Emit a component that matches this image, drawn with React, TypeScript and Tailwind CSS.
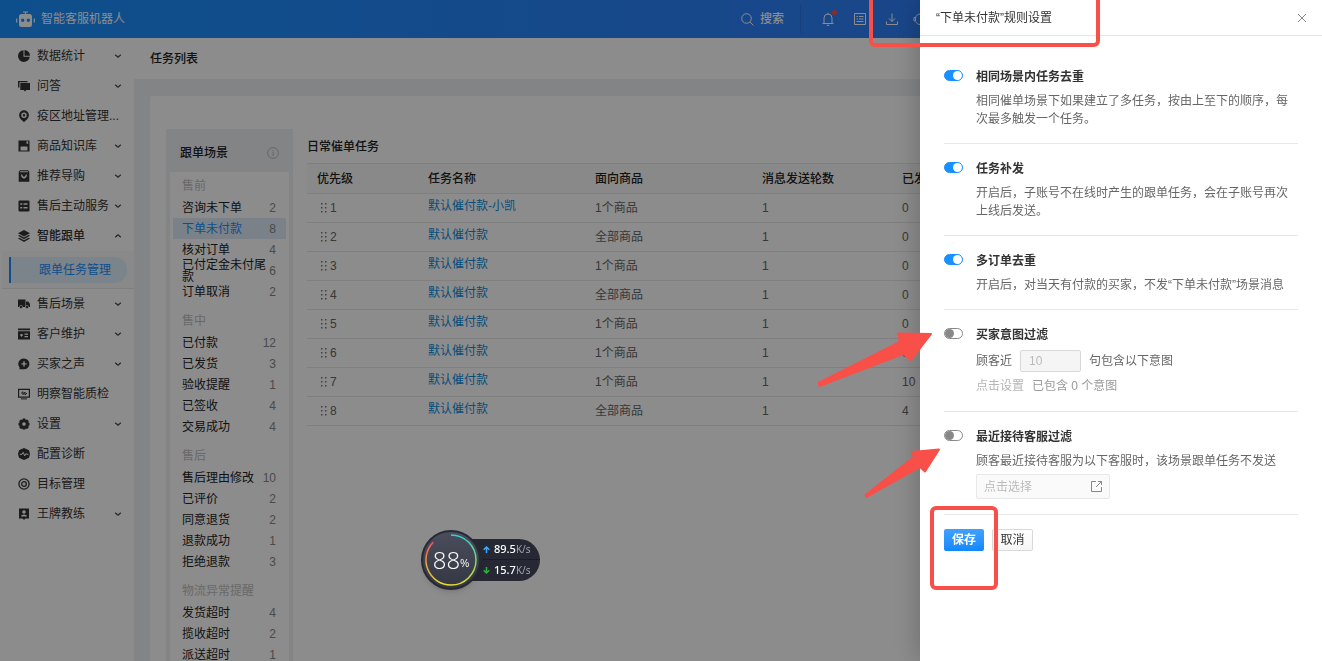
import type { ReactNode } from 'react';

interface NavItem {
  label: string;
  icon: ReactNode;
  arrow?: boolean;
  open?: boolean;
}

interface SceneGroup {
  title: string;
  items: { name: string; count: number }[];
}

interface SwitchProps {
  id: string;
  defaultChecked?: boolean;
}

interface RuleProps {
  id: string;
  title: string;
  on?: boolean;
  children: ReactNode;
}

function Glyph({ children }: { children: ReactNode }) {
  return (
    <svg viewBox="0 0 12 12" className="w-3 h-3 flex-shrink-0" fill="#333" aria-hidden="true">
      {children}
    </svg>
  );
}

const navTop: NavItem[] = [
  {
    label: '数据统计',
    arrow: true,
    icon: (
      <>
        <path d="M5.500.200A5.900 5.900 0 1 0 11.800 6.700H5.500z" />
        <path d="M6.500 0v5.700H12A5.700 5.700 0 0 0 6.500 0z" />
      </>
    ),
  },
  {
    label: '问答',
    arrow: true,
    icon: (
      <>
        <path d="M0 1h9.500v1.200H1.400v5.300H0z" />
        <path d="M2.300 3H12v7H8.300L7 11.400 5.700 10H2.300z" />
      </>
    ),
  },
  {
    label: '疫区地址管理...',
    icon: (
      <path
        fillRule="evenodd"
        d="M6 .3a4.900 4.900 0 0 1 4.900 4.900c0 2.900-3 5.300-4.900 6.800C4.100 10.500 1.100 8.100 1.100 5.200A4.900 4.900 0 0 1 6 .3zM6 2.500a2.700 2.700 0 1 0 0 5.400 2.700 2.700 0 0 0 0-5.400zM6 3.900a1.300 1.300 0 1 1 0 2.600 1.300 1.300 0 0 1 0-2.600z"
      />
    ),
  },
  {
    label: '商品知识库',
    arrow: true,
    icon: <path fillRule="evenodd" d="M.500.500h11v11H.500zM8.500 1.300v2.500h1.700v-2.500zM2.500 6.500v4h7v-4z" />,
  },
  {
    label: '推荐导购',
    arrow: true,
    icon: (
      <path
        fillRule="evenodd"
        d="M2 .3h8l1.300 1.500v9.900H.700V1.800zM2.300 1.300l-.6 1h8.600l-.6-1zM3 4.500c0 5.200 6 5.200 6 0H7.700c0 3-3.400 3-3.400 0z"
      />
    ),
  },
  {
    label: '售后主动服务',
    arrow: true,
    icon: (
      <path
        fillRule="evenodd"
        d="M1.500.500h9a1 1 0 0 1 1 1v9a1 1 0 0 1-1 1h-9a1 1 0 0 1-1-1v-9a1 1 0 0 1 1-1zM2.300 3.300v1.400h2V3.300zM5.500 3.300v1.400h4V3.300zM2.300 7v1.400h2V7zM5.500 7v1.400h4V7z"
      />
    ),
  },
  {
    label: '智能跟单',
    arrow: true,
    open: true,
    icon: (
      <>
        <path d="M6 0l6 3.200-6 3.200L0 3.200z" />
        <path d="M1.400 5L6 7.500 10.600 5l1.400.800L6 9.200 0 5.800z" />
        <path d="M1.400 7.800L6 10.300l4.600-2.500 1.400.8L6 12 0 8.600z" />
      </>
    ),
  },
];

const navBottom: NavItem[] = [
  {
    label: '售后场景',
    arrow: true,
    icon: (
      <>
        <path d="M0 1.500h7.500v7.500H0z" />
        <path d="M8 3.500h2.300L12 6v3H8z" />
        <circle cx="3" cy="9" r="1.600" stroke="#fff" strokeWidth=".6" />
        <circle cx="9" cy="9" r="1.600" stroke="#fff" strokeWidth=".6" />
      </>
    ),
  },
  {
    label: '客户维护',
    arrow: true,
    icon: (
      <path
        fillRule="evenodd"
        d="M0 .5h12v1.800H0zM0 3.200h12v8.300H0zM2 7l1.500 2L5 7l-.8-1H2.800zM6.500 5.500v1.200H10V5.500zM6.500 8v1.200H10V8z"
      />
    ),
  },
  {
    label: '买家之声',
    arrow: true,
    icon: (
      <path
        fillRule="evenodd"
        d="M6 .5a5.400 5.400 0 1 1 0 10.800H1.500V9.300A5.400 5.400 0 0 1 6 .5zM5.300 3.300v1.900H3.400v1.400h1.900v1.900h1.400V6.600h1.900V5.200H6.700V3.300z"
      />
    ),
  },
  {
    label: '明察智能质检',
    icon: (
      <>
        <path fillRule="evenodd" d="M0 .8h12v9H0zM1.200 2v6.600h9.600V2z" />
        <path d="M3 10.400h6v1H3z" />
        <path d="M3 5.500L5 3.700v3L7 4v3l2-2" fill="none" stroke="#333" />
      </>
    ),
  },
  {
    label: '设置',
    arrow: true,
    icon: (
      <path
        fillRule="evenodd"
        d="M4.700.500h2.600l.4 1.400 1.400-.500 1.700 1.700-.5 1.500 1.200.400v2.300l-1.200.500.5 1.400-1.700 1.700-1.400-.5-.4 1.200H4.700l-.4-1.200-1.400.5-1.700-1.700.5-1.400L.500 7.300V5l1.200-.4-.5-1.500 1.700-1.700 1.400.5zM6 4.300a1.800 1.800 0 1 0 0 3.600 1.800 1.800 0 0 0 0-3.600z"
      />
    ),
  },
  {
    label: '配置诊断',
    icon: (
      <>
        <path d="M6 0l5 2.200L12 6l-1 3.800L6 12 1 9.800 0 6l1-3.800z" />
        <path d="M1.800 6.300H4l1.200-2 1.500 3.600 1.200-2.300 1 .7h1.500" fill="none" stroke="#fff" />
      </>
    ),
  },
  {
    label: '目标管理',
    icon: (
      <g fill="none" stroke="#333" strokeWidth="1.300">
        <circle cx="6" cy="6" r="5.100" />
        <circle cx="6" cy="6" r="2.300" />
      </g>
    ),
  },
  {
    label: '王牌教练',
    arrow: true,
    icon: (
      <path
        fillRule="evenodd"
        d="M1 .5h10v10H7.300L6 12l-1.300-1.500H1zM6 2.200a1.800 1.800 0 1 0 0 3.600 1.800 1.800 0 0 0 0-3.600zM3 8.600h6C9 5.900 3 5.900 3 8.600z"
      />
    ),
  },
];

const sceneGroups: SceneGroup[] = [
  {
    title: '售前',
    items: [
      { name: '咨询未下单', count: 2 },
      { name: '下单未付款', count: 8 },
      { name: '核对订单', count: 4 },
      { name: '已付定金未付尾款', count: 6 },
      { name: '订单取消', count: 2 },
    ],
  },
  {
    title: '售中',
    items: [
      { name: '已付款', count: 12 },
      { name: '已发货', count: 3 },
      { name: '验收提醒', count: 1 },
      { name: '已签收', count: 4 },
      { name: '交易成功', count: 4 },
    ],
  },
  {
    title: '售后',
    items: [
      { name: '售后理由修改', count: 10 },
      { name: '已评价', count: 2 },
      { name: '同意退货', count: 2 },
      { name: '退款成功', count: 1 },
      { name: '拒绝退款', count: 3 },
    ],
  },
  {
    title: '物流异常提醒',
    items: [
      { name: '发货超时', count: 4 },
      { name: '揽收超时', count: 2 },
      { name: '派送超时', count: 1 },
    ],
  },
];

const tasks = [
  { name: '默认催付款-小凯', target: '1个商品', rounds: 1, sent: 0 },
  { name: '默认催付款', target: '全部商品', rounds: 1, sent: 0 },
  { name: '默认催付款', target: '1个商品', rounds: 1, sent: 0 },
  { name: '默认催付款', target: '全部商品', rounds: 1, sent: 0 },
  { name: '默认催付款', target: '1个商品', rounds: 1, sent: 0 },
  { name: '默认催付款', target: '1个商品', rounds: 1, sent: 6 },
  { name: '默认催付款', target: '1个商品', rounds: 1, sent: 10 },
  { name: '默认催付款', target: '全部商品', rounds: 1, sent: 4 },
];

function NavRow({ item }: { item: NavItem }) {
  return (
    <li>
      <button className="flex items-center w-full h-[30px] pl-[18px] pr-3">
        <Glyph>{item.icon}</Glyph>
        <span className={`ml-[7px] whitespace-nowrap text-left ${item.open ? 'font-medium' : ''}`}>
          {item.label}
        </span>
        {item.arrow && (
          <svg
            viewBox="0 0 8 8"
            className={`ml-auto w-2 h-2 flex-shrink-0 ${item.open ? 'rotate-180' : ''}`}
            fill="none"
            stroke="#444"
            strokeWidth="1.200"
            aria-hidden="true"
          >
            <path d="M1.200 2.700L4 5.300l2.800-2.600" />
          </svg>
        )}
      </button>
    </li>
  );
}

function Header() {
  return (
    <header className="flex items-center h-[38px] flex-shrink-0 pl-4 pr-[395px] text-white bg-linear-to-r from-[#1890ff] to-[#3478f8]">
      <svg viewBox="0 0 19 17" className="w-[19px] h-[17px]" aria-hidden="true">
        <path d="M7 1h5M9.500 1v2" stroke="#fff" strokeWidth="1.200" />
        <path
          fill="#fff"
          fillRule="evenodd"
          d="M5.500 3h8A2.500 2.500 0 0 1 16 5.500v8a2.500 2.500 0 0 1-2.500 2.500h-8A2.500 2.500 0 0 1 3 13.500v-8A2.500 2.500 0 0 1 5.500 3zM6.700 7.500a1.700 1.700 0 1 0 0 3.400 1.700 1.700 0 0 0 0-3.400zM12.300 7.500a1.700 1.700 0 1 0 0 3.400 1.700 1.700 0 0 0 0-3.400z"
        />
        <path d="M.7 7.500v4M18.300 7.500v4" stroke="#fff" strokeWidth="1.200" />
      </svg>
      <h1 className="ml-[6px]">智能客服机器人</h1>

      <div className="flex items-center ml-auto">
        <button className="flex items-center gap-[6px]">
          <svg viewBox="0 0 13 13" className="w-[13px] h-[13px]" fill="none" stroke="#fff" aria-hidden="true">
            <circle cx="5.500" cy="5.500" r="4.800" />
            <path d="M9 9l3.500 3.500" />
          </svg>
          <span className="font-medium">搜索</span>
        </button>
        <span className="ml-4 w-px h-7 bg-black/10" />
        <div className="flex items-center gap-[18px] ml-5">
          <button className="relative" aria-label="通知">
            <svg viewBox="0 0 14 14" className="w-[14px] h-[14px]" fill="none" stroke="#fff" aria-hidden="true">
              <path d="M1.500 11.500h11M3 11.500V6a4 4 0 0 1 8 0v5.500M7 2V.8M5.800 13.300h2.400" />
            </svg>
            <span className="absolute -top-[2px] -right-[2px] w-[5px] h-[5px] rounded-full bg-[#ff4d4f]" />
          </button>
          <button aria-label="清单">
            <svg viewBox="0 0 14 14" className="w-[14px] h-[14px]" fill="none" stroke="#fff" aria-hidden="true">
              <path d="M1.500 1.500h11v11h-11zM3.500 4.500h1.500M6 4.500h4.500M3.500 7h1.500M6 7h4.500M3.500 9.500h7" />
            </svg>
          </button>
          <button aria-label="下载">
            <svg viewBox="0 0 14 14" className="w-[14px] h-[14px]" fill="none" stroke="#fff" aria-hidden="true">
              <path d="M7 1.500v8M4 6.500l3 3 3-3M1.500 9.500v3h11v-3" />
            </svg>
          </button>
          <button className="-ml-1" aria-label="客服">
            <svg viewBox="0 0 14 14" className="w-[14px] h-[14px]" fill="none" stroke="#fff" aria-hidden="true">
              <path d="M2.500 6.500a4.500 4.500 0 0 1 9 0M2.500 5.500H1v3.500h1.500zM11.500 5.500H13v3.500h-1.500zM3 9.500c.5 2 2 3 4 3" />
            </svg>
          </button>
        </div>
      </div>
    </header>
  );
}

function Sidebar() {
  return (
    <nav className="w-[134px] flex-shrink-0 pt-[3px] bg-white text-[#333]">
      <ul>
        {navTop.map((item) => (
          <NavRow key={item.label} item={item} />
        ))}
      </ul>
      <div className="flex items-center h-[38px] ml-[2px] px-[7px] bg-[#fafafa] border-b border-[#e8e8e8]">
        <a
          href="#tasks"
          className="flex items-center w-full h-[26px] pl-7 rounded-r-full border-l-2 border-[#1890ff] bg-[#e0effd] text-[#1890ff]"
        >
          跟单任务管理
        </a>
      </div>
      <ul>
        {navBottom.map((item) => (
          <NavRow key={item.label} item={item} />
        ))}
      </ul>
    </nav>
  );
}

function ScenePanel() {
  return (
    <aside className="w-[127px] flex-shrink-0 px-1 bg-[#eef1f5]">
      <div className="flex items-center justify-between h-[43px] pt-1 px-[10px]">
        <h3 className="font-medium text-[#222]">跟单场景</h3>
        <svg viewBox="0 0 12 12" className="w-3 h-3" fill="none" stroke="#bbb" aria-hidden="true">
          <circle cx="6" cy="6" r="5.400" />
          <path d="M6 5v4M6 3v1" />
        </svg>
      </div>
      <div className="px-[3px] pt-1 pb-3 bg-white">
        {sceneGroups.map((group, i) => (
          <section key={group.title} className={i > 0 ? 'mt-[9px]' : ''}>
            <h4 className="h-[21px] leading-[21px] pl-[9px] text-[#c0c0c0]">{group.title}</h4>
            <ul>
              {group.items.map((item) => {
                const active = item.name === '下单未付款';
                return (
                  <li key={item.name}>
                    <button
                      className={`flex items-center justify-between w-full h-[21px] pl-[9px] pr-[10px] text-left ${
                        active ? 'bg-[#deebf8] text-[#1890ff]' : 'text-[#222]'
                      }`}
                    >
                      <span className="leading-3">{item.name}</span>
                      <span className="text-[#888]">{item.count}</span>
                    </button>
                  </li>
                );
              })}
            </ul>
          </section>
        ))}
      </div>
    </aside>
  );
}

function TaskTable() {
  return (
    <div className="flex-1 min-w-0 ml-[14px]">
      <h3 className="h-[34px] leading-[36px] font-medium text-[#222]">日常催单任务</h3>
      <table className="w-full table-fixed border-t border-[#e8e8e8] text-left text-[#666]">
        <thead>
          <tr className="h-[30px] bg-[#fafafa] border-b border-[#e8e8e8] text-[#222]">
            <th className="w-[111px] px-[10px] font-medium">优先级</th>
            <th className="w-[167px] px-[10px] font-medium">任务名称</th>
            <th className="w-[167px] px-[10px] font-medium">面向商品</th>
            <th className="w-[140px] px-[10px] font-medium">消息发送轮数</th>
            <th className="px-[10px] font-medium">已发送人数</th>
          </tr>
        </thead>
        <tbody>
          {tasks.map((task, i) => (
            <tr key={i} className="h-[29px] border-b border-[#e8e8e8]">
              <td className="px-[10px]">
                <div className="flex items-center gap-[3px] pl-1">
                  <svg viewBox="0 0 6 10" className="w-[6px] h-[10px]" fill="#777" aria-hidden="true">
                    <path d="M0 0h1.500v1.500H0zM4 0h1.500v1.500H4zM0 4h1.500v1.500H0zM4 4h1.500v1.500H4zM0 8h1.500v1.500H0zM4 8h1.500v1.500H4z" />
                  </svg>
                  {i + 1}
                </div>
              </td>
              <td className="px-[10px] pb-1">
                <a href="#task" className="text-[#0a8fe0]">
                  {task.name}
                </a>
              </td>
              <td className="px-[10px]">{task.target}</td>
              <td className="px-[10px]">{task.rounds}</td>
              <td className="px-[10px]">{task.sent}</td>
            </tr>
          ))}
        </tbody>
      </table>
    </div>
  );
}

function Switch({ id, defaultChecked = false }: SwitchProps) {
  return (
    <input
      id={id}
      type="checkbox"
      role="switch"
      defaultChecked={defaultChecked}
      className="flex items-center w-[19px] h-[11px] mt-[2px] flex-shrink-0 appearance-none rounded-full border border-[#888] bg-white cursor-pointer before:w-[9px] before:h-[9px] before:rounded-full before:bg-[#888] checked:border-[#1890ff] checked:bg-[#1890ff] checked:before:ml-2 checked:before:bg-white"
    />
  );
}

function Rule({ id, title, on, children }: RuleProps) {
  return (
    <section className="flex items-start gap-[13px] pt-4 pb-[15px] border-b border-[#e8e8e8]">
      <Switch id={id} defaultChecked={on} />
      <div className="flex-1 min-w-0">
        <label htmlFor={id} className="block font-bold text-[#333]">
          {title}
        </label>
        <div className="mt-[6px] text-[#666]">{children}</div>
      </div>
    </section>
  );
}

function RuleDrawer() {
  return (
    <aside
      role="dialog"
      aria-label="规则设置"
      className="fixed inset-y-0 right-0 w-[402px] bg-white shadow-[-4px_0_24px_rgba(0,0,0,0.2)]"
    >
      <div className="flex items-center justify-between h-9 pl-4 pr-[15px] border-b border-[#e8e8e8]">
        <h2 className="text-[#333]">“下单未付款”规则设置</h2>
        <button aria-label="关闭">
          <svg viewBox="0 0 10 10" className="w-[10px] h-[10px]" fill="none" stroke="#888" aria-hidden="true">
            <path d="M1 1l8 8M9 1L1 9" />
          </svg>
        </button>
      </div>

      <div className="px-6 pt-4">
        <Rule id="dedupe-scene" title="相同场景内任务去重" on>
          相同催单场景下如果建立了多任务，按由上至下的顺序，每次最多触发一个任务。
        </Rule>
        <Rule id="resend" title="任务补发" on>
          开启后，子账号不在线时产生的跟单任务，会在子账号再次上线后发送。
        </Rule>
        <Rule id="dedupe-order" title="多订单去重" on>
          开启后，对当天有付款的买家，不发“下单未付款”场景消息
        </Rule>
        <Rule id="intent" title="买家意图过滤">
          <div className="flex items-center gap-2">
            <label htmlFor="intent-count">顾客近</label>
            <input
              id="intent-count"
              defaultValue="10"
              disabled
              className="w-[61px] h-[22px] px-2 rounded-xs border border-[#d9d9d9] bg-[#f5f5f5] text-[#bbb]"
            />
            <span>句包含以下意图</span>
          </div>
          <div className="flex gap-2 mt-1 leading-5 text-[#999]">
            <button disabled className="text-[#b5b5b5]">
              点击设置
            </button>
            <span>已包含 0 个意图</span>
          </div>
        </Rule>
        <Rule id="recent-agent" title="最近接待客服过滤">
          顾客最近接待客服为以下客服时，该场景跟单任务不发送
          <button
            disabled
            className="flex items-center justify-between w-[134px] h-[25px] mt-1 px-[7px] rounded-xs border border-[#e8e8e8] bg-[#fafafa] text-[#bbb]"
          >
            点击选择
            <svg viewBox="0 0 11 11" className="w-[11px] h-[11px]" fill="none" stroke="#888" aria-hidden="true">
              <path d="M5 .5H.500v10h10V6M7 .500h3.500V4M10.500.500L5 6" />
            </svg>
          </button>
        </Rule>

        <div className="flex gap-2 mt-[14px]">
          <button className="w-10 h-[22px] rounded-xs bg-linear-to-b from-[#40a0ff] to-[#1088ff] font-bold text-white">
            保存
          </button>
          <button className="w-[41px] h-[22px] rounded-xs border border-[#d9d9d9] bg-linear-to-b from-white to-[#f5f5f5] text-[#333]">
            取消
          </button>
        </div>
      </div>
    </aside>
  );
}

function SpeedWidget() {
  return (
    <div className="fixed left-[421px] top-[530px] flex items-center h-[60px]">
      <div className="relative z-10 flex items-center justify-center w-[60px] h-[60px] rounded-full border-2 border-[#272a35] bg-linear-to-b from-[#4a4e5c] to-[#343743] shadow-md">
        <svg viewBox="0 0 56 56" className="absolute inset-0 w-14 h-14" fill="none" strokeWidth="1.500" aria-hidden="true">
          <defs>
            <linearGradient id="arc-right" x1="0" y1="0" x2="0" y2="1">
              <stop offset="0" stopColor="#35d0d8" />
              <stop offset=".6" stopColor="#8fd860" />
              <stop offset="1" stopColor="#e8dc30" />
            </linearGradient>
            <linearGradient id="arc-left" x1="0" y1="0" x2="0" y2="1">
              <stop offset="0" stopColor="#f05560" />
              <stop offset=".5" stopColor="#f0a040" />
              <stop offset="1" stopColor="#e8dc30" />
            </linearGradient>
          </defs>
          <path d="M28 3a25 25 0 0 1 0 50" stroke="url(#arc-right)" />
          <path d="M28 53A25 25 0 0 1 10.300 10.300" stroke="url(#arc-left)" />
        </svg>
        <span className="font-['Open_Sans','Noto_Sans',sans-serif] font-light text-2xl text-white">88</span>
        <span className="pt-2 text-[10px] text-white">%</span>
      </div>
      <div className="-ml-5 w-[79px] h-[42px] pl-[22px] rounded-r-full bg-[#262934] text-white text-[11px] leading-5 font-['Noto_Sans',sans-serif] font-medium">
        <div className="flex items-center gap-1 border-b border-[#1b1d26]">
          <svg viewBox="0 0 7 7" className="w-[7px] h-[7px]" fill="none" stroke="#40a9ff" strokeWidth="1.500" aria-hidden="true">
            <path d="M3.500 7V1M.700 3.700L3.500 1l2.800 2.700" />
          </svg>
          <span>
            89.5<span className="text-[10px] font-normal text-[#a0a3ad]">K/s</span>
          </span>
        </div>
        <div className="flex items-center gap-1">
          <svg viewBox="0 0 7 7" className="w-[7px] h-[7px]" fill="none" stroke="#2bb534" strokeWidth="1.500" aria-hidden="true">
            <path d="M3.500 0v6M.700 3.300L3.500 6l2.800-2.700" />
          </svg>
          <span>
            15.7<span className="text-[10px] font-normal text-[#a0a3ad]">K/s</span>
          </span>
        </div>
      </div>
    </div>
  );
}

// Red boxes and arrows drawn over the page, anchored to the drawer side
function Markup() {
  return (
    <div className="fixed inset-y-0 right-0 w-[522px] pointer-events-none">
      <div className="absolute left-[69px] -top-2 w-[231px] h-[55px] rounded-md border-4 border-[#f94f49]" />
      <div className="absolute left-[130px] top-[506px] w-[68px] h-[84px] rounded-md border-4 border-[#f94f49]" />
      <svg viewBox="800 0 522 661" className="w-full" fill="#f94f49" stroke="#f94f49" strokeWidth="2" strokeLinejoin="round" aria-hidden="true">
        <path d="M818.500 383L900 342 898 333.500 931 334 911 360 903 354 819.500 386z" />
        <path d="M865.500 495L914 457 912 452 939 449.500 925 471.500 920 467 866.500 497z" />
      </svg>
    </div>
  );
}

export default function App() {
  return (
    <div className="flex flex-col h-screen overflow-hidden bg-[#eef1f5] text-xs leading-[18px] font-['Liberation_Sans','Noto_Sans_CJK_SC',sans-serif]">
      <Header />
      <div className="flex flex-1 min-h-0">
        <Sidebar />
        <main className="flex flex-col flex-1 min-w-0">
          <h2 className="h-[41px] flex-shrink-0 leading-[43px] px-4 bg-white font-medium text-[#222]">任务列表</h2>
          <div className="flex flex-1 min-h-0 mt-[17px] mx-4 px-4 pt-[33px] rounded-t-xs bg-white">
            <ScenePanel />
            <TaskTable />
          </div>
        </main>
      </div>

      <div className="fixed inset-0 bg-black/45" />
      <SpeedWidget />
      <RuleDrawer />
      <Markup />
    </div>
  );
}
